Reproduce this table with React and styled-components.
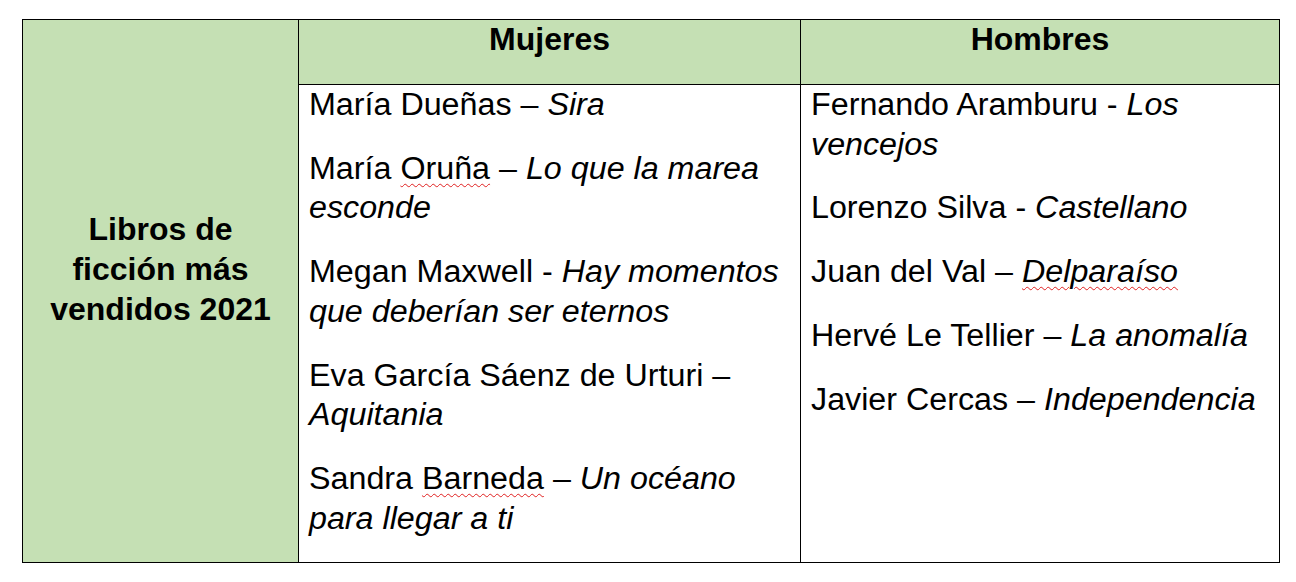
import styled, { createGlobalStyle } from 'styled-components';

const GlobalStyle = createGlobalStyle`
    html, body {
        margin: 0;
        padding: 0;
        background: #ffffff;
    }
    body {
        font-family: "Liberation Sans", Arial, sans-serif;
        color: #000000;
    }
`;

const Page = styled.main`
    padding: 19px 0 0 22px;
`;

const TableGrid = styled.div`
    display: grid;
    grid-template-columns: 276px 502px 479px;
    grid-template-rows: 65px 478px;
    border-left: 1px solid #000;
    border-top: 1px solid #000;
    width: max-content;
    font-size: 32px;
    line-height: 39.7px;
`;

const Cell = styled.div`
    box-sizing: border-box;
    border-right: 1px solid #000;
    border-bottom: 1px solid #000;
    background: ${({ $green }) => ($green ? '#c5e0b4' : '#ffffff')};
    padding: 0 9px 0 10px;
`;

const SideCell = styled(Cell)`
    grid-row: 1 / span 2;
    display: flex;
    align-items: center;
    justify-content: center;
    text-align: center;
    font-weight: 700;
    padding: 0 9px 42px;
`;

const HeadCell = styled(Cell)`
    text-align: center;
    font-weight: 700;
    padding: 0 9px;
`;

const Entry = styled.p`
    margin: 0 0 24px;
    font-size: 32.25px;
`;

const Title = styled.i`
    font-style: italic;
`;

const Spell = styled.span`
    text-decoration: underline wavy #e02020;
    text-decoration-thickness: 1px;
    text-underline-offset: 4px;
`;

const women = [
    { author: 'María Dueñas', sep: '–', title: 'Sira' },
    { author: 'María', flagged: 'Oruña', sep: '–', title: 'Lo que la marea esconde' },
    { author: 'Megan Maxwell', sep: '-', title: 'Hay momentos que deberían ser eternos' },
    { author: 'Eva García Sáenz de Urturi', sep: '–', title: 'Aquitania' },
    { author: 'Sandra', flagged: 'Barneda', sep: '–', title: 'Un océano para llegar a ti' },
];

const men = [
    { author: 'Fernando Aramburu', sep: '-', title: 'Los vencejos' },
    { author: 'Lorenzo Silva', sep: '-', title: 'Castellano' },
    { author: 'Juan del Val', sep: '–', title: 'Delparaíso', flagTitle: true },
    { author: 'Hervé Le Tellier', sep: '–', title: 'La anomalía' },
    { author: 'Javier Cercas', sep: '–', title: 'Independencia' },
];

function BookEntry({ author, flagged, sep, title, flagTitle }) {
    return (
        <Entry>
            {author}
            {flagged && (
                <>
                    {' '}
                    <Spell>{flagged}</Spell>
                </>
            )}{' '}
            {sep}{' '}
            <Title>{flagTitle ? <Spell>{title}</Spell> : title}</Title>
        </Entry>
    );
}

export default function App() {
    return (
        <Page>
            <GlobalStyle />
            <TableGrid>
                <SideCell $green>
                    <div>
                        Libros de
                        <br />
                        ficción más
                        <br />
                        vendidos 2021
                    </div>
                </SideCell>
                <HeadCell $green>Mujeres</HeadCell>
                <HeadCell $green>Hombres</HeadCell>
                <Cell>
                    {women.map((b) => (
                        <BookEntry key={b.title} {...b} />
                    ))}
                </Cell>
                <Cell>
                    {men.map((b) => (
                        <BookEntry key={b.title} {...b} />
                    ))}
                </Cell>
            </TableGrid>
        </Page>
    );
}
